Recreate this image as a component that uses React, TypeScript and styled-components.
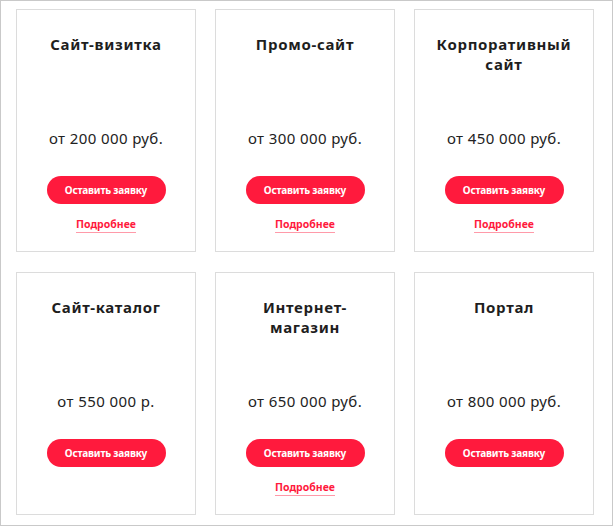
import React from "react";
import styled, { createGlobalStyle } from "styled-components";

const Global = createGlobalStyle`
  html, body { margin: 0; padding: 0; background: #fff; }
  * { box-sizing: border-box; }
`;

const Frame = styled.div`
  width: 613px;
  height: 526px;
  border: 1px solid #c9c9c9;
  background: #fff;
  padding: 8px 0 0 15px;
`;

const Grid = styled.div`
  display: grid;
  grid-template-columns: repeat(3, 180px);
  grid-auto-rows: 243px;
  column-gap: 19px;
  row-gap: 20px;
`;

const Card = styled.div`
  border: 1px solid #dcdcdc;
  display: flex;
  flex-direction: column;
  align-items: center;
  padding-top: 24px;
`;

const Title = styled.h3`
  margin: 0;
  height: 40px;
  width: 100%;
  padding: 0 8px;
  text-align: center;
  font-family: "Noto Sans", sans-serif;
  font-weight: 700;
  font-size: 15px;
  line-height: 20px;
  letter-spacing: 0.7px;
  color: #1e1e1e;
`;

const Price = styled.div`
  margin-top: 54px;
  font-family: "Noto Sans", sans-serif;
  font-size: 15px;
  line-height: 20px;
  letter-spacing: 0.4px;
  color: #222;
`;

const Button = styled.button`
  margin-top: 28px;
  width: 119px;
  height: 28px;
  border: none;
  border-radius: 14px;
  background: #ff1a3d;
  color: #fff;
  font-family: "Noto Sans", sans-serif;
  font-weight: 700;
  font-size: 10px;
  letter-spacing: -0.2px;
  padding: 0;
  cursor: pointer;
`;

const More = styled.a`
  margin-top: 13px;
  font-family: "Noto Sans", sans-serif;
  font-weight: 700;
  font-size: 10.5px;
  line-height: 14px;
  color: #ff1a3d;
  text-decoration: none;
  padding-bottom: 1px;
  border-bottom: 1px solid #ff9aa9;
`;

type Item = { title: React.ReactNode; price: string; more: boolean };

const items: Item[] = [
  { title: "Сайт-визитка", price: "от 200 000 руб.", more: true },
  { title: "Промо-сайт", price: "от 300 000 руб.", more: true },
  { title: <>Корпоративный<br />сайт</>, price: "от 450 000 руб.", more: true },
  { title: "Сайт-каталог", price: "от 550 000 р.", more: false },
  { title: <>Интернет-<br />магазин</>, price: "от 650 000 руб.", more: true },
  { title: "Портал", price: "от 800 000 руб.", more: false },
];

export default function App() {
  return (
    <>
      <Global />
      <Frame>
        <Grid>
          {items.map((it, i) => (
            <Card key={i}>
              <Title>{it.title}</Title>
              <Price>{it.price}</Price>
              <Button>Оставить заявку</Button>
              {it.more && <More href="#">Подробнее</More>}
            </Card>
          ))}
        </Grid>
      </Frame>
    </>
  );
}
